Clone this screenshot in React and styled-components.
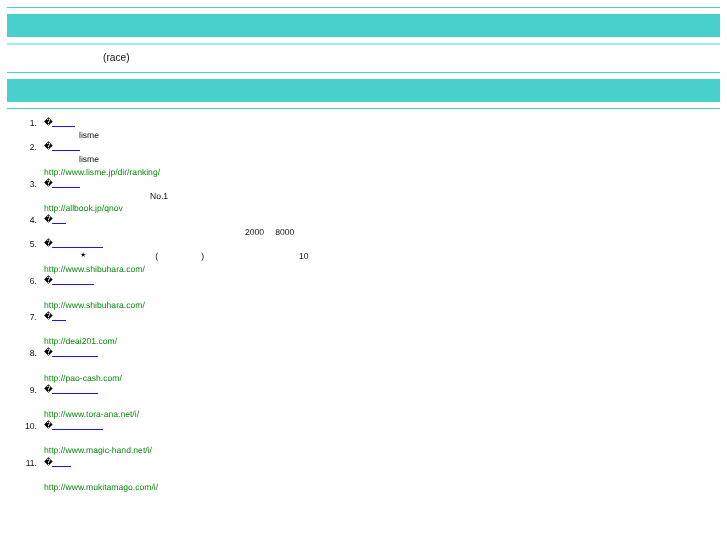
import React from "react";
import styled, { createGlobalStyle } from "styled-components";

const Global = createGlobalStyle`
  html, body { margin: 0; padding: 0; background: #fff; }
  body { font-family: "Liberation Sans", Arial, sans-serif; color: #111; }
`;
const Page = styled.main`
  padding: 7px 7px 0;
  display: flex;
  flex-direction: column;
  filter: blur(0.3px);
`;
const Rule = styled.hr`
  margin: ${(p) => p.$mt ?? 0}px 0 0;
  border: 0;
  height: ${(p) => p.$h ?? 1}px;
  background: ${(p) => p.$c ?? "#48d1cc"};
`;
const Band = styled.h2`
  margin: ${(p) => p.$mt}px 0 0;
  height: ${(p) => p.$h}px;
  background: #48d1cc;
`;
const Lead = styled.p`
  margin: 6px 0 0;
  height: 21px;
  line-height: 13px;
  padding-left: 96px;
  font-size: 10.2px;
  color: #111;
`;
const List = styled.ol`
  list-style: none;
  margin: 8px 0 0;
  padding: 0 0 0 17px;
  font-size: 8.6px;
  line-height: 12.14px;
  text-rendering: geometricPrecision;
`;
const Item = styled.li`
  display: grid;
  grid-template-columns: 20px 1fr;
`;
const Num = styled.span`
  padding-right: 7px;
  text-align: right;
  color: #111;
`;
const Body = styled.div`
  display: flex;
  flex-direction: column;
`;
const Line = styled.div`
  display: flex;
  height: 12.14px;
  white-space: pre;
`;
const Mark = styled.span`
  width: 8px;
  font-family: "DejaVu Sans", sans-serif;
  font-size: 8.6px;
  color: #000;
`;
const Title = styled.a`
  display: inline-block;
  width: ${(p) => p.$w}px;
  height: 9px;
  border-bottom: 1px solid #1818f0;
`;
const Note = styled.span`
  margin-left: ${(p) => p.$x}px;
  color: #111;
  font-size: ${(p) => (p.$small ? 7 : 8.6)}px;
`;
const Url = styled.a`
  color: #0a8a0a;
  text-decoration: none;
`;

const items = [
  { w: 23, notes: [[35, "lisme"]] },
  { w: 28, notes: [[35, "lisme"]], url: "http://www.lisme.jp/dir/ranking/" },
  { w: 28, notes: [[106, "No.1"]], url: "http://allbook.jp/qnov" },
  { w: 14, notes: [[201, "2000"], [11, "8000"]] },
  { w: 51, notes: [[36, "★", true], [69, "("], [43, ")"], [95, "10"]], url: "http://www.shibuhara.com/" },
  { w: 42, url: "http://www.shibuhara.com/" },
  { w: 14, url: "http://deai201.com/" },
  { w: 46, url: "http://pao-cash.com/" },
  { w: 46, url: "http://www.tora-ana.net/i/" },
  { w: 51, url: "http://www.magic-hand.net/i/" },
  { w: 19, url: "http://www.mukitamago.com/i/" },
];

export default function App() {
  return (
    <>
      <Global />
      <Page>
        <Rule />
        <Band $mt={6} $h={23} />
        <Rule $mt={6} $h={2} $c="#a4ebe7" />
        <Lead>(race)</Lead>
        <Rule $mt={0} />
        <Band $mt={6} $h={23} />
        <Rule $mt={6} />
        <List>
          {items.map((it, i) => (
            <Item key={i}>
              <Num>{i + 1}.</Num>
              <Body>
                <Line>
                  <Mark>{"\uFFFD"}</Mark>
                  <Title href="#" $w={it.w} />
                </Line>
                <Line>
                  {(it.notes ?? []).map(([x, t, small]) => (
                    <Note key={t} $x={x} $small={small}>{t}</Note>
                  ))}
                </Line>
                {it.url && (
                  <Line>
                    <Url href={it.url}>{it.url}</Url>
                  </Line>
                )}
              </Body>
            </Item>
          ))}
        </List>
      </Page>
    </>
  );
}
